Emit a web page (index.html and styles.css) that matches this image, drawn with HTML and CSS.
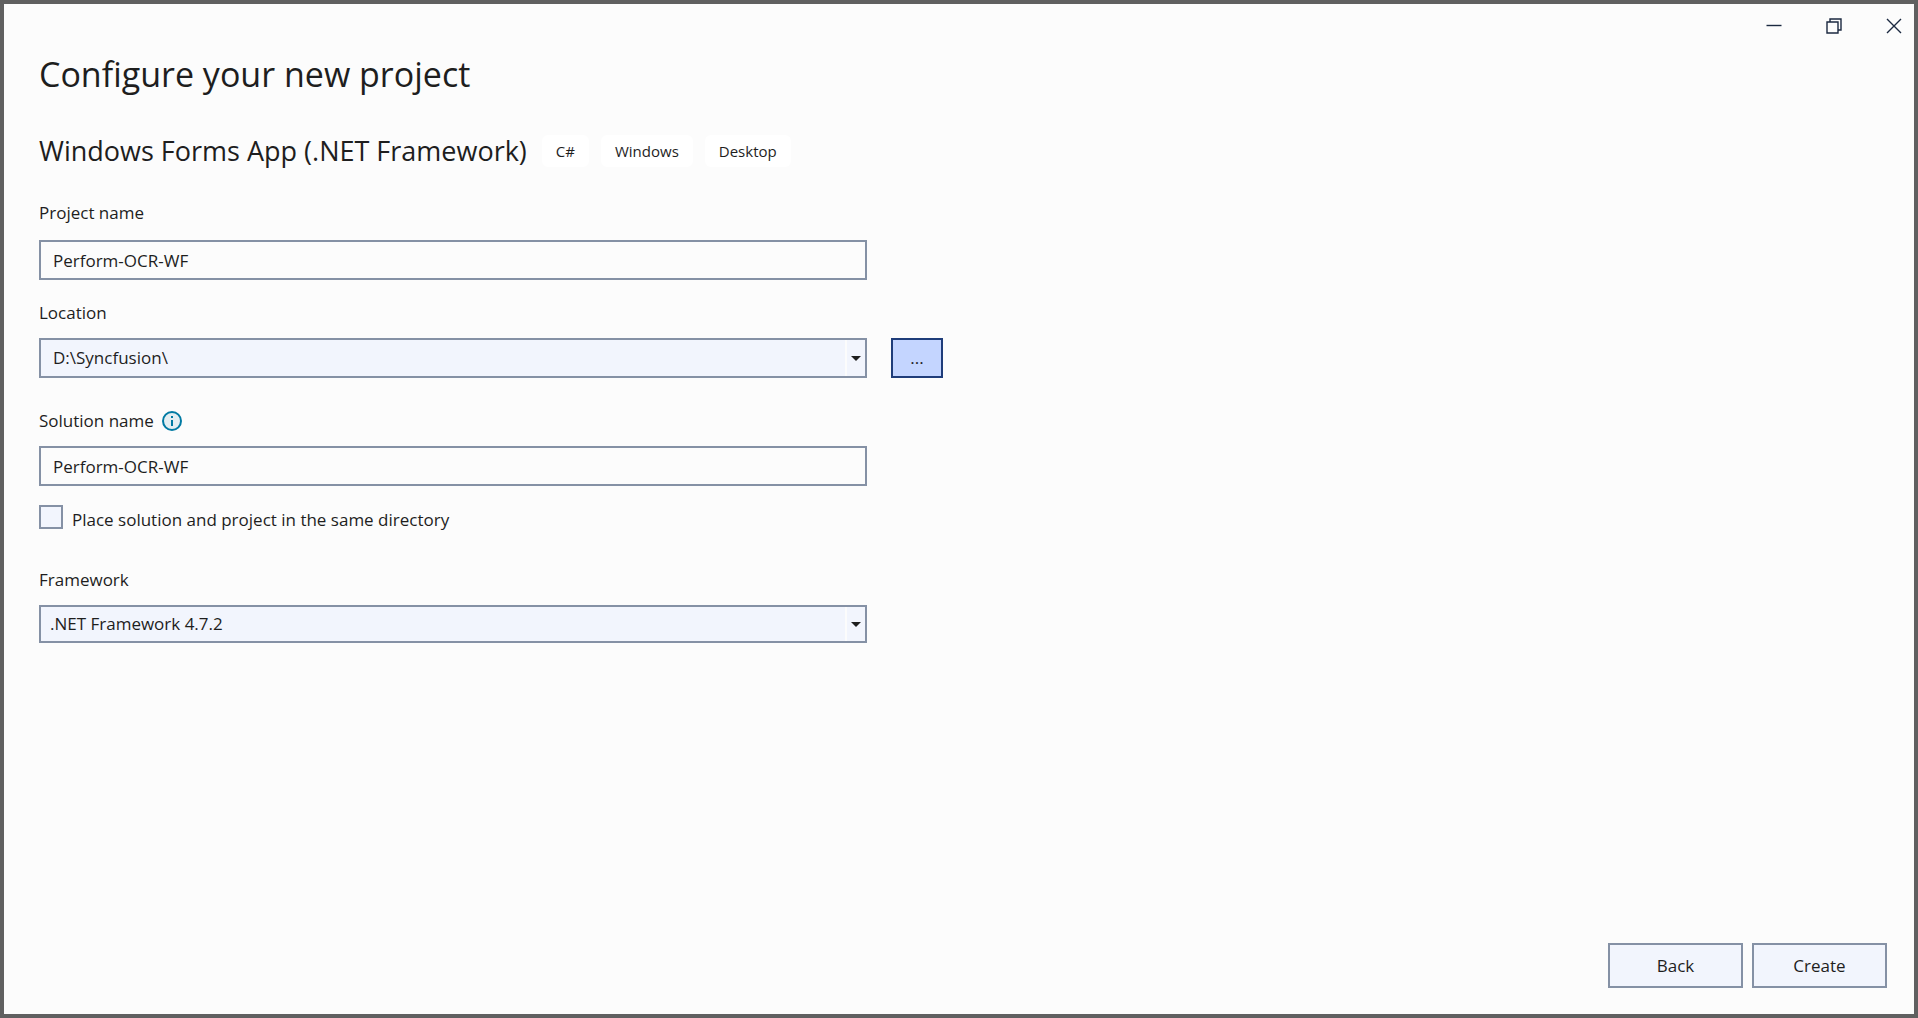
FILE: index.html
```
<!DOCTYPE html>
<html lang="en">
<head>
    <meta charset="UTF-8">
    <meta name="viewport" content="width=device-width, initial-scale=1.0">
    <title>Configure your new project</title>
    <link rel="stylesheet" href="styles.css">
</head>
<body>
    <div class="window">
        <div class="title-bar">
            <button type="button" class="window-button" aria-label="Minimize">
                <svg width="16" height="16" viewBox="0 0 16 16"><path d="M0.5 7.5H15.5"/></svg>
            </button>
            <button type="button" class="window-button" aria-label="Restore">
                <svg width="16" height="16" viewBox="0 0 16 16"><path d="M1 4H12V15H1ZM4 4V1H15V12H12"/></svg>
            </button>
            <button type="button" class="window-button" aria-label="Close">
                <svg width="16" height="16" viewBox="0 0 16 16"><path d="M1 1L15 15M15 1L1 15"/></svg>
            </button>
        </div>

        <form class="content">
            <h1>Configure your new project</h1>
            <div class="template">
                <h2>Windows Forms App (.NET Framework)</h2>
                <ul class="tags">
                    <li>C#</li>
                    <li>Windows</li>
                    <li>Desktop</li>
                </ul>
            </div>

            <div class="field project">
                <label for="projectName">Project name</label>
                <input type="text" id="projectName" value="Perform-OCR-WF">
            </div>

            <div class="field">
                <label for="location">Location</label>
                <div class="location-row">
                    <div class="select-box">
                        <select id="location">
                            <option>D:\Syncfusion\</option>
                        </select>
                        <span class="arrow"><svg width="10" height="5" viewBox="0 0 10 5"><path d="M0 0H10L5 5Z"/></svg></span>
                    </div>
                    <button type="button" class="browse" aria-label="Browse">...</button>
                </div>
            </div>

            <div class="field solution">
                <div class="label-row">
                    <label for="solutionName">Solution name</label>
                    <svg class="info" width="20" height="20" viewBox="0 0 20 20">
                        <circle cx="10" cy="10" r="9"/>
                        <path d="M9 5H11V7H9ZM9 9H11V15H9Z"/>
                    </svg>
                </div>
                <input type="text" id="solutionName" value="Perform-OCR-WF">
            </div>

            <div class="check-row">
                <input type="checkbox" id="sameDirectory">
                <label for="sameDirectory">Place solution and project in the same directory</label>
            </div>

            <div class="field framework">
                <label for="framework">Framework</label>
                <div class="select-box">
                    <select id="framework">
                        <option>.NET Framework 4.7.2</option>
                    </select>
                    <span class="arrow"><svg width="10" height="5" viewBox="0 0 10 5"><path d="M0 0H10L5 5Z"/></svg></span>
                </div>
            </div>

            <div class="actions">
                <button type="button">Back</button>
                <button type="submit">Create</button>
            </div>
        </form>
    </div>
</body>
</html>
```
FILE: styles.css
```
* {
    box-sizing: border-box;
}

body {
    margin: 0;
    font-family: "Open Sans", "Noto Sans", sans-serif;
    font-size: 17px;
    line-height: 24px;
    color: #1e1e1e;
}

.window {
    display: flex;
    flex-direction: column;
    min-height: 100vh;
    border: 4px solid #606060;
    background-color: #fcfcfc;
}

button,
input,
select {
    margin: 0;
    font: inherit;
    color: inherit;
    border: 2px solid #8591a5;
    border-radius: 0;
    background-color: #f2f5fd;
}

/* Window controls */
.title-bar {
    display: flex;
    justify-content: flex-end;
    gap: 20px;
    height: 44px;
}

.window-button {
    display: flex;
    align-items: center;
    justify-content: center;
    width: 40px;
    padding: 0;
    border: none;
    background: none;
}

.window-button svg {
    fill: none;
    stroke: #1b2940;
    stroke-width: 1.4;
}

/* Form */
.content {
    flex: 1;
    display: flex;
    flex-direction: column;
    padding: 2px 27px 26px 35px;
}

h1 {
    margin: 0;
    font-size: 34px;
    font-weight: 400;
    line-height: 48px;
}

.template {
    display: flex;
    align-items: center;
    gap: 15px;
    margin: 33px 0 14px;
}

h2 {
    margin: 0;
    font-size: 27px;
    font-weight: 400;
    line-height: 40px;
}

.tags {
    display: flex;
    gap: 12px;
    margin: 0;
    padding: 0;
    list-style: none;
    font-size: 15px;
}

.tags li {
    padding: 4px 14px;
    border-radius: 6px;
    background-color: #fff;
}

.field {
    display: flex;
    flex-direction: column;
    gap: 13px;
    max-width: 828px;
    margin-top: 16px;
}

.field.project {
    gap: 15px;
}

.field + .field {
    margin-top: 21px;
}

.field input {
    height: 40px;
    padding: 0 12px;
    background-color: #fcfcfc;
}

.location-row {
    display: flex;
    gap: 24px;
    width: calc(100% + 76px); /* browse button hangs outside the field column */
}

.select-box {
    position: relative;
    flex: 1;
}

select {
    display: block;
    width: 100%;
    height: 40px;
    padding: 0 32px 0 12px;
    appearance: none;
}

.arrow {
    position: absolute;
    top: 2px;
    right: 2px;
    bottom: 2px;
    display: flex;
    align-items: center;
    justify-content: center;
    width: 20px;
    border-left: 2px solid #fcfcfc;
    pointer-events: none;
}

.arrow svg {
    fill: #1e1e1e;
}

.browse {
    width: 52px;
    padding: 0;
    border-color: #1f3d7a;
    background-color: #c4d5ff;
}

.field.solution {
    margin-top: 31px;
}

.label-row {
    display: flex;
    align-items: center;
    gap: 8px;
}

.info {
    fill: #007aa3;
}

.info circle {
    fill: #e3eef2;
    stroke: #007aa3;
    stroke-width: 2;
}

.check-row {
    display: flex;
    align-items: flex-start;
    gap: 9px;
    margin-top: 19px;
}

.check-row input {
    width: 24px;
    height: 24px;
    appearance: none;
}

.check-row label {
    padding-top: 3px;
}

.check-row input:checked {
    background-color: #1f3d7a;
}

.field.framework {
    margin-top: 36px;
}

.framework select {
    height: 38px;
    padding-left: 9px;
}

.actions {
    display: flex;
    justify-content: flex-end;
    gap: 9px;
    margin-top: auto;
    padding-top: 24px;
}

.actions button {
    width: 135px;
    height: 45px;
}
```
